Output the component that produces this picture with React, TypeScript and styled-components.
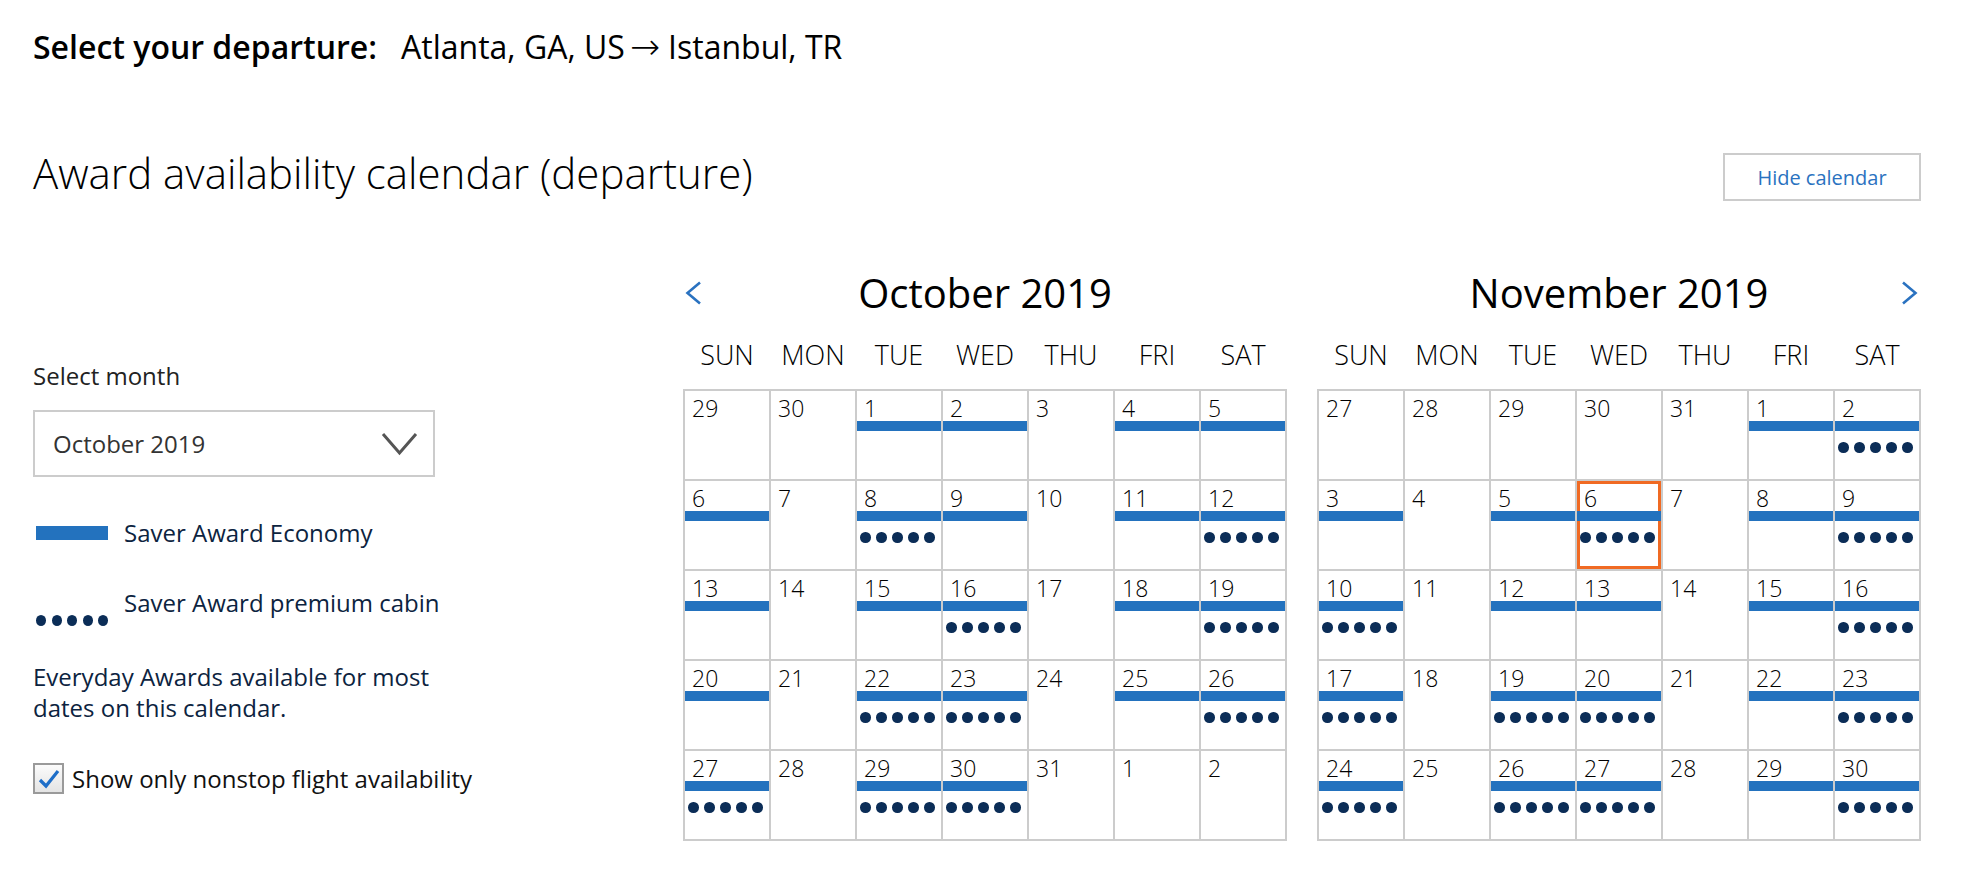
import styled, { createGlobalStyle, css } from "styled-components";

const GlobalStyle = createGlobalStyle`
  body {
    margin: 0;
    background: #fff;
    font-family: "Open Sans", "Liberation Sans", sans-serif;
    color: #000;
  }
`;

const Page = styled.div`
  width: 1888px;
  padding: 25px 0 40px 33px;
`;

const RouteLine = styled.div`
  font-size: 32px;
  line-height: 44px;
  display: flex;
  .label {
    font-weight: 600;
    margin-right: 24px;
  }
  .arrow {
    font-family: "DejaVu Sans", sans-serif;
    font-weight: 200;
    font-size: 36px;
    line-height: 44px;
    margin: 0 8px 0 5px;
  }
`;

const TitleRow = styled.div`
  margin-top: 84px;
  display: flex;
  justify-content: space-between;
  align-items: flex-start;
`;

const Title = styled.h1`
  margin: 0;
  font-size: 42px;
  line-height: 40px;
  font-weight: 300;
`;

const HideButton = styled.button`
  width: 198px;
  height: 48px;
  margin-top: 0;
  border: 2px solid #ccc;
  background: #fff;
  color: #2a72c0;
  font-family: inherit;
  font-size: 20px;
  cursor: pointer;
`;

const Body = styled.div`
  margin-top: 70px;
  display: flex;
  justify-content: space-between;
`;

const Sidebar = styled.div`
  width: 440px;
  padding-top: 89px;
  font-size: 24px;
  line-height: 32px;
`;

const FieldLabel = styled.div`
  color: #222;
`;

const SelectBox = styled.div`
  margin-top: 18px;
  width: 402px;
  height: 67px;
  box-sizing: border-box;
  border: 2px solid #ccc;
  display: flex;
  align-items: center;
  justify-content: space-between;
  padding: 0 15px 0 18px;
  color: #333;
`;

const LegendRow = styled.div<{ $gap: number }>`
  margin-top: ${(p) => p.$gap}px;
  display: flex;
  align-items: flex-start;
  color: #0c2340;
`;

const Swatch = styled.div<{ $offset: number }>`
  width: 72px;
  margin: ${(p) => p.$offset}px 16px 0 3px;
  flex-shrink: 0;
`;

const LegendBar = styled.div`
  height: 14px;
  background: #2372be;
`;

const Note = styled.p`
  margin: 35px 0 0;
  color: #0c2340;
  width: 400px;
  line-height: 31px;
`;

const CheckRow = styled.label`
  margin-top: 40px;
  display: flex;
  align-items: center;
  gap: 8px;
  color: #111;
`;

const CheckBox = styled.span`
  width: 31px;
  height: 31px;
  box-sizing: border-box;
  border: 2px solid #9a9a9a;
  background: linear-gradient(#fbfbfb, #e4e4e4);
  display: flex;
  align-items: center;
  justify-content: center;
`;

const Calendars = styled.div`
  display: flex;
  gap: 30px;
`;

const Month = styled.div`
  width: 604px;
`;

const MonthHeader = styled.div`
  height: 44px;
  box-sizing: border-box;
  padding-bottom: 5px;
  display: grid;
  grid-template-columns: 40px 1fr 40px;
  align-items: center;
`;

const MonthTitle = styled.div`
  text-align: center;
  font-size: 40px;
  line-height: 44px;
`;

const NavArrow = styled.button<{ $side: "left" | "right" }>`
  border: 0;
  background: none;
  padding: 0;
  display: flex;
  cursor: pointer;
  justify-content: ${(p) => (p.$side === "left" ? "flex-start" : "flex-end")};
  ${(p) =>
    p.$side === "left"
      ? css`
          padding-left: 2px;
        `
      : css`
          padding-right: 3px;
        `}
`;

const Weekdays = styled.div`
  margin-top: 22px;
  display: grid;
  grid-template-columns: repeat(7, 1fr);
  padding: 0 1px;
  font-size: 27px;
  line-height: 36px;
  font-weight: 300;
  text-align: center;
`;

const Grid = styled.div`
  margin-top: 16px;
  display: grid;
  grid-template-columns: repeat(7, 84px);
  grid-auto-rows: 88px;
  gap: 2px;
  padding: 2px;
  background: #ccc;
`;

const Cell = styled.div<{ $selected?: boolean }>`
  background: #fff;
  padding-top: 4px;
  ${(p) =>
    p.$selected &&
    css`
      box-shadow: inset 0 0 0 3px #f06a23;
    `}
`;

const DayNum = styled.div`
  font-size: 23px;
  line-height: 26px;
  font-weight: 300;
  padding-left: 7px;
  height: 26px;
`;

const Bar = styled.div`
  height: 10px;
  background: #2372be;
`;

const Dots = styled.div<{ $top: number; $left: number }>`
  display: flex;
  gap: 5.5px;
  margin-top: ${(p) => p.$top}px;
  padding-left: ${(p) => p.$left}px;
  span {
    width: 10.5px;
    height: 10.5px;
    border-radius: 50%;
    background: #0b2d57;
    filter: blur(0.7px);
  }
`;

const DotRow = ({ top = 0, left = 0 }: { top?: number; left?: number }) => (
  <Dots $top={top} $left={left}>
    <span />
    <span />
    <span />
    <span />
    <span />
  </Dots>
);

const Chevron = ({ dir }: { dir: "left" | "right" | "down" }) => {
  if (dir === "down")
    return (
      <svg width="37" height="24" viewBox="0 0 37 24">
        <polyline points="2,2 18.5,21 35,2" fill="none" stroke="#555" strokeWidth="3" />
      </svg>
    );
  return (
    <svg width="17" height="24" viewBox="0 0 17 24">
      <polyline
        points={dir === "left" ? "15,1.5 2.5,12 15,22.5" : "2,1.5 14.5,12 2,22.5"}
        fill="none"
        stroke="#2a72c0"
        strokeWidth="2.6"
      />
    </svg>
  );
};

type Day = { n: number; bar?: boolean; dots?: boolean; sel?: boolean };

// e = economy bar, p = economy + premium dots, "" = none
const build = (nums: number[], codes: string[], selected = -1): Day[] =>
  nums.map((n, i) => ({
    n,
    bar: codes[i] !== "",
    dots: codes[i] === "p",
    sel: i === selected,
  }));

const range = (a: number, b: number) =>
  Array.from({ length: b - a + 1 }, (_, i) => a + i);

const october = build(
  [29, 30, ...range(1, 31), 1, 2],
  [
    "", "", "e", "e", "", "e", "e",
    "e", "", "p", "e", "", "e", "p",
    "e", "", "e", "p", "", "e", "p",
    "e", "", "p", "p", "", "e", "p",
    "p", "", "p", "p", "", "", "",
  ]
);

const november = build(
  [27, 28, 29, 30, 31, ...range(1, 30)],
  [
    "", "", "", "", "", "e", "p",
    "e", "", "e", "p", "", "e", "p",
    "p", "", "e", "e", "", "e", "p",
    "p", "", "p", "p", "", "e", "p",
    "p", "", "p", "p", "", "e", "p",
  ],
  10
);

const weekdays = ["SUN", "MON", "TUE", "WED", "THU", "FRI", "SAT"];

const MonthView = ({
  title,
  days,
  nav,
}: {
  title: string;
  days: Day[];
  nav: "left" | "right";
}) => (
  <Month>
    <MonthHeader>
      {nav === "left" ? (
        <NavArrow $side="left" aria-label="Previous month">
          <Chevron dir="left" />
        </NavArrow>
      ) : (
        <span />
      )}
      <MonthTitle>{title}</MonthTitle>
      {nav === "right" ? (
        <NavArrow $side="right" aria-label="Next month">
          <Chevron dir="right" />
        </NavArrow>
      ) : (
        <span />
      )}
    </MonthHeader>
    <Weekdays>
      {weekdays.map((d) => (
        <div key={d}>{d}</div>
      ))}
    </Weekdays>
    <Grid>
      {days.map((d, i) => (
        <Cell key={i} $selected={d.sel}>
          <DayNum>{d.n}</DayNum>
          {d.bar && <Bar />}
          {d.dots && <DotRow top={11} left={3} />}
        </Cell>
      ))}
    </Grid>
  </Month>
);

const App = () => {
  return (
    <>
      <GlobalStyle />
      <Page>
        <RouteLine>
          <span className="label">Select your departure:</span>
          <span>
            Atlanta, GA, US<span className="arrow">→</span>Istanbul, TR
          </span>
        </RouteLine>
        <TitleRow>
          <Title>Award availability calendar (departure)</Title>
          <HideButton>Hide calendar</HideButton>
        </TitleRow>
        <Body>
          <Sidebar>
            <FieldLabel>Select month</FieldLabel>
            <SelectBox>
              <span>October 2019</span>
              <Chevron dir="down" />
            </SelectBox>
            <LegendRow $gap={40}>
              <Swatch $offset={9}>
                <LegendBar />
              </Swatch>
              <span>Saver Award Economy</span>
            </LegendRow>
            <LegendRow $gap={38}>
              <Swatch $offset={28}>
                <DotRow />
              </Swatch>
              <span>Saver Award premium cabin</span>
            </LegendRow>
            <Note>Everyday Awards available for most dates on this calendar.</Note>
            <CheckRow>
              <CheckBox>
                <svg width="22" height="20" viewBox="0 0 22 20">
                  <polyline
                    points="2,11 8,17 20,2"
                    fill="none"
                    stroke="#1e6ec8"
                    strokeWidth="3.2"
                  />
                </svg>
              </CheckBox>
              <span>Show only nonstop flight availability</span>
            </CheckRow>
          </Sidebar>
          <Calendars>
            <MonthView title="October 2019" days={october} nav="left" />
            <MonthView title="November 2019" days={november} nav="right" />
          </Calendars>
        </Body>
      </Page>
    </>
  );
};

export default App;
